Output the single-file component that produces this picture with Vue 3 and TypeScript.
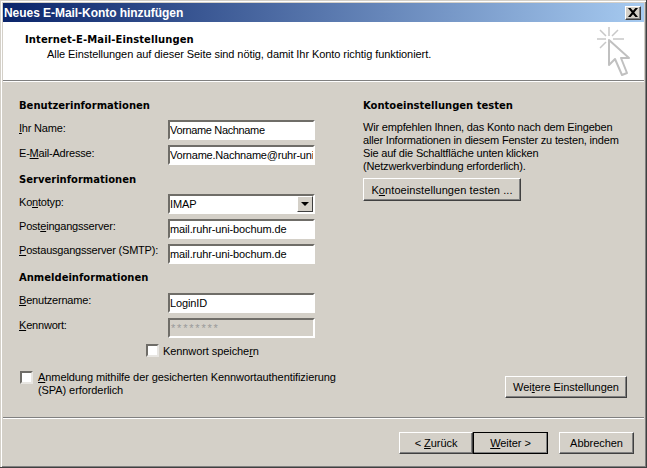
<script setup lang="ts">
const ui = 'x';
</script>

<template>
  <div class="window" :data-k="ui">
    <div class="title">
      <span class="title-text">Neues E-Mail-Konto hinzufügen</span>
      <span class="close">
        <svg width="10" height="9" viewBox="0 0 10 9"><path d="M0 0h2.600l2.400 2.800L7.400 0H10L6.300 4.500 10 9H7.400L5 6.200 2.600 9H0l3.700-4.500z" fill="#000"/></svg>
      </span>
    </div>
    <header class="head">
      <div class="head-text">
        <h1>Internet-E-Mail-Einstellungen</h1>
        <p>Alle Einstellungen auf dieser Seite sind nötig, damit Ihr Konto richtig funktioniert.</p>
      </div>
      <svg class="wizard" width="38" height="52" viewBox="0 0 38 52">
        <g stroke="#c8c8c8" stroke-width="1.500" fill="none">
          <path d="M12 1v9M0 13h9M16 13h11M3 4l6 6M21 4l-6 6M3 22l6-6"/>
        </g>
        <path d="M12 14V39l6-6 7 16 5-2-6-15h8z" fill="#fff" stroke="#c0c0c0" stroke-width="2" stroke-linejoin="round"/>
      </svg>
    </header>
    <main class="body">
      <section class="left">
        <h2 class="top">Benutzerinformationen</h2>
        <div class="row"><label class="lower"><u>I</u>hr Name:</label><div class="input name">Vorname Nachname</div></div>
        <div class="row"><label class="lower">E-<u>M</u>ail-Adresse:</label><div class="input tight">Vorname.Nachname@ruhr-uni</div></div>
        <h2 class="sub server">Serverinformationen</h2>
        <div class="row">
          <label class="lower">Ko<u>n</u>totyp:</label>
          <div class="input select">IMAP<span class="arrow"><i></i></span></div>
        </div>
        <div class="row"><label>Post<u>e</u>ingangsserver:</label><div class="input">mail.ruhr-uni-bochum.de</div></div>
        <div class="row"><label class="raise"><u>P</u>ostausgangsserver (SMTP):</label><div class="input">mail.ruhr-uni-bochum.de</div></div>
        <h2 class="sub">Anmeldeinformationen</h2>
        <div class="row"><label><u>B</u>enutzername:</label><div class="input">LoginID</div></div>
        <div class="row"><label><u>K</u>ennwort:</label><div class="input disabled">********</div></div>
        <div class="check save"><span class="box"></span><span class="check-text">Kennwort speiche<u>r</u>n</span></div>
        <div class="check spa"><span class="box"></span><span class="check-text"><u>A</u>nmeldung mithilfe der gesicherten Kennwortauthentifizierung<br>(SPA) erforderlich</span></div>
      </section>
      <section class="right">
        <h2>Kontoeinstellungen testen</h2>
        <p>Wir empfehlen Ihnen, das Konto nach dem Eingeben<br>aller Informationen in diesem Fenster zu testen, indem<br>Sie auf die Schaltfläche unten klicken<br>(Netzwerkverbindung erforderlich).</p>
        <button class="btn test">K<u>o</u>ntoeinstellungen testen ...</button>
        <button class="btn more">Wei<u>t</u>ere Einstellungen</button>
      </section>
    </main>
    <footer class="foot">
      <button class="btn back">&lt; <u>Z</u>urück</button>
      <button class="btn next"><u>W</u>eiter &gt;</button>
      <button class="btn cancel">Abbrechen</button>
    </footer>
  </div>
</template>

<style>
html, body { margin: 0; background: #d4d0c8; }
</style>

<style scoped>
.window {
  width: 647px; height: 468px; box-sizing: border-box;
  display: flex; flex-direction: column;
  background: #d4d0c8;
  padding: 3px 2px 2px 3px;
  border-right: 1px solid #404040; border-bottom: 1px solid #404040;
  box-shadow: inset 1px 1px 0 #d4d0c8, inset 2px 2px 0 #fff, inset -1px -1px 0 #808080;
  font-family: "Liberation Sans", Arial, sans-serif;
  font-size: 11px; color: #000;
  overflow: hidden;
}
.title {
  height: 19px; flex: none; display: flex; align-items: center; justify-content: space-between;
  background: linear-gradient(90deg, #0a246a, #a6caf0);
  padding: 0 3px 0 1px;
}
.title-text { color: #fff; font-weight: 700; font-size: 12px; letter-spacing: -.05px; }
.close {
  width: 16px; height: 14px; box-sizing: border-box; display: flex; align-items: center; justify-content: center;
  background: #d4d0c8;
  border: 1px solid; border-color: #fff #404040 #404040 #fff;
  box-shadow: inset -1px -1px 0 #808080;
}
.head {
  height: 58px; flex: none; box-sizing: border-box; position: relative;
  background: #fff; display: flex; justify-content: space-between;
}
.head-text { padding: 11px 0 0 22px; }
h1 { margin: 0; font: 700 10px "DejaVu Sans", sans-serif; line-height: 14px; letter-spacing: .1px; }
.head p { margin: 0 0 0 22px; line-height: 14px; letter-spacing: -.07px; }
.wizard { position: absolute; left: 594px; top: 4px; }
.body {
  flex: 1; min-height: 0; display: flex;
  border-top: 1px solid #808080;
  box-shadow: inset 0 1px 0 #fff;
  border-bottom: 1px solid #808080;
}
h2 { margin: 0; font: 700 10px "DejaVu Sans", sans-serif; line-height: 14px; }
.left { width: 360px; flex: none; padding: 18px 0 0 16px; box-sizing: border-box; }
.left h2.top { height: 21px; }
.left h2.sub { height: 22px; margin-top: 2px; }
.left h2.server { height: 21px; margin-top: 3px; }
.row { display: flex; height: 25px; }
.row label { width: 149px; flex: none; line-height: 14px; letter-spacing: -.2px; }
.row label.lower { padding-top: 1px; height: 14px; }
.row label.raise { margin-top: -1px; }
.input {
  width: 147px; height: 20px; box-sizing: border-box; position: relative;
  background: #fff; overflow: hidden; white-space: nowrap;
  border: 2px solid; border-color: #6f6d68 #fff #fff #6f6d68;
  padding: 0; line-height: 17px; letter-spacing: -.12px;
}
.name { letter-spacing: -.35px; }
.tight { letter-spacing: -.22px; }
.disabled { background: #d4d0c8; color: #9a9a9a; letter-spacing: 1.8px; padding-left: 1px; }
.arrow {
  position: absolute; right: 0; top: 0; width: 16px; height: 16px; box-sizing: border-box;
  background: #d4d0c8; border: 1px solid; border-color: #fff #404040 #404040 #fff;
  display: flex; align-items: center; justify-content: center;
}
.arrow i { width: 0; height: 0; border: 4px solid transparent; border-top-color: #000; border-bottom: 0; }
.check { display: flex; gap: 4px; line-height: 13px; letter-spacing: -.08px; }
.save .check-text { padding-top: 1px; }
.box {
  width: 13px; height: 13px; box-sizing: border-box; flex: none; background: #fff;
  border: 2px solid; border-color: #6f6d68 #e8e6e2 #e8e6e2 #6f6d68;
}
.save { height: 13px; margin: 1px 0 0 127px; }
.spa { margin: 14px 0 0 1px; }
.spa .box { margin-right: 1px; }
.right { flex: 1; position: relative; padding: 18px 0 0; display: flex; flex-direction: column; align-items: flex-start; }
.right h2 { height: 16px; }
.right p { margin: 6px 0 0; line-height: 13px; letter-spacing: -.18px; }
.btn {
  font: inherit; color: #000; background: #d4d0c8; padding: 0; margin: 0; box-sizing: border-box;
  border: 1px solid; border-color: #fff #404040 #404040 #fff;
  box-shadow: inset -1px -1px 0 #808080;
  letter-spacing: -.05px;
}
.test { width: 158px; height: 23px; margin-top: 5px; letter-spacing: .08px; }
.more { position: absolute; left: 142px; top: 295px; width: 122px; height: 22px; }
.foot { height: 47px; flex: none; display: flex; align-items: flex-start; padding: 13px 0 0 396px; border-top: 1px solid #fff; box-sizing: border-box; }
.foot .btn { height: 22px; }
.back { width: 74px; }
.next { width: 75px; outline: 1px solid #000; outline-offset: -1px; }
.cancel { width: 75px; margin-left: 11px; }
u { text-decoration: underline; }
</style>
